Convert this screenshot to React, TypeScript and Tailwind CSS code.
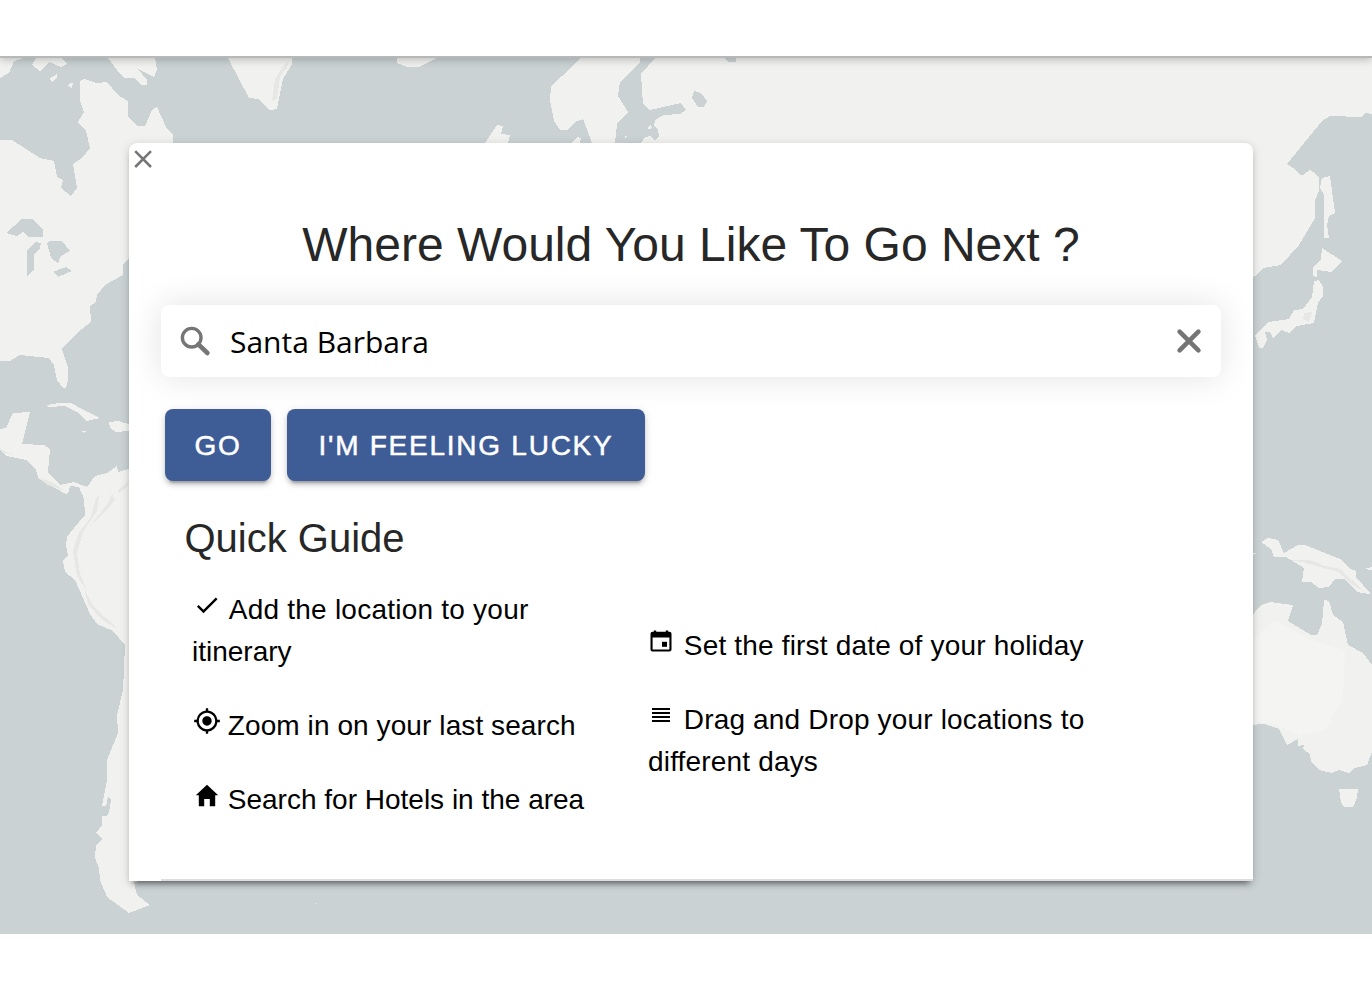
import type { ReactNode } from 'react';
import { MdCheck, MdMyLocation } from 'react-icons/md';

const LAND = [
  // North America
  '0,140 12,140 40,158 54,161 57,177 63,180 61,188 71,196 77,188 73,164 82,158 90,148 86,131 78,122 84,112 80,100 80,81 84,79 97,83 107,82 118,95 128,101 128,117 137,126 145,126 152,110 157,107 167,129 173,134 173,150 180,200 129,259 123,264 123,275 105,285 97,295 96,302 90,306 91,322 78,332 62,349 68,368 68,380 66,388 63,388 57,380 54,365 49,358 20,355 10,361 0,361',
  '0,58 24,58 14,61 9,73 0,78',
  '36,58 32,65 40,71 49,62 61,67 67,64 62,58',
  '49,79 57,74 57,78 52,82',
  '68,86 70,83 73,83 72,88',
  '108,58 117,70 124,78 134,78 142,85 147,85 147,80 138,69 154,77 157,70 155,58',
  // Greenland and Iceland
  '228,58 249,98 258,99 270,110 277,109 283,79 292,64 292,58',
  '397,58 397,63 407,67 419,67 437,58',
  // Europe and Asia
  '580,58 573,66 551,86 550,100 554,121 560,130 567,130 575,122 583,119 592,143 615,143 617,124 628,112 618,96 620,82 640,62 640,58',
  '485,143 497,125 503,126 501,134 510,135 508,143',
  '571,143 577,137 581,138 580,143',
  '624,137 626,135 627,137 625,138',
  '647,128 651,125 652,128 649,129',
  '655,58 641,74 643,104 650,110 681,103 686,110 680,114 664,115 655,120 654,126 658,129 659,136 655,141 650,136 645,137 641,143 641,160 1240,290 1255,276 1263,268 1281,265 1299,245 1315,218 1315,200 1319,191 1319,178 1316,174 1310,170 1303,175 1300,175 1296,170 1287,164 1322,121 1330,116 1361,117 1366,113 1372,114 1372,58',
  '1322,178 1330,176 1335,213 1329,216 1327,225 1329,238 1324,238 1324,195 1320,188',
  '1322,248 1342,261 1331,272 1317,270 1317,277 1313,276 1313,268 1321,259',
  '1314,281 1319,280 1323,287 1323,296 1318,303 1314,323 1297,326 1289,333 1282,330 1273,338 1270,332 1265,332 1267,340 1263,348 1259,348 1255,335 1269,322 1289,319 1294,310 1303,309 1312,297',
  // Caribbean
  '47,405 59,403 71,403 82,409 100,418 87,421 77,412 65,406 48,407',
  '109,422 118,421 129,424 140,430 128,431 116,432 110,428',
  '82,431 87,431 83,433',
  // Central and South America
  '0,429 6,428 13,413 30,412 22,444 44,445 50,449 48,472 60,485 74,482 87,487 95,476 107,473 117,466 118,472 129,469 200,469 200,870 134,882 137,895 150,905 129,913 107,897 100,880 99,868 95,858 96,845 102,839 96,833 102,825 102,816 107,816 109,812 111,800 108,797 106,806 102,806 107,780 107,760 118,733 117,715 123,690 125,645 113,631 97,624 90,614 75,580 65,572 63,561 68,555 66,545 67,537 74,528 85,515 84,499 79,487 70,486 69,491 66,494 39,479 36,470 26,460 6,456 0,450',
  // New Guinea
  '1261,542 1268,538 1278,540 1284,553 1298,545 1305,545 1340,559 1349,568 1356,571 1356,577 1370,593 1369,594 1357,592 1344,579 1335,579 1329,587 1319,588 1311,582 1302,582 1304,568 1286,557 1274,557 1271,549',
  '1364,569 1372,567 1372,570',
  '1250,551 1257,554 1250,555',
  // Australia and Tasmania
  '1250,618 1261,605 1270,602 1293,605 1288,621 1311,635 1317,635 1322,624 1324,600 1329,601 1333,615 1343,622 1348,645 1363,653 1372,665 1372,752 1367,765 1355,768 1349,773 1339,770 1332,773 1319,770 1311,762 1310,754 1303,749 1304,745 1298,746 1298,739 1287,745 1279,729 1264,724 1250,725',
  '1339,789 1358,789 1357,798 1353,807 1344,807 1341,802',
  '315,903 316,903 316,904 315,904',
];

const WATER = [
  '6,233 22,219 32,219 43,230 43,237 29,237 23,232 17,236',
  '27,250 35,242 41,243 40,248 34,254 34,270 27,276',
  '47,243 50,241 62,241 70,251 61,256 58,263 51,258',
  '53,272 66,267 72,271 58,277',
  '62,269 66,268 69,270 64,272',
  '694,91 701,93 707,101 704,107 698,107 692,98',
  '724,58 728,62 736,62 736,58',
];

const RELIEF = [
  '96,498 99,495 97,511 83,532 77,553 80,574 88,592 77,576 73,551 79,533 91,517',
  '112,494 115,500 107,510 90,526 108,503',
  '84,588 93,606 105,617 116,628 102,620 88,604',
  '118,490 129,481 127,487 119,493',
  '0,448 6,452 14,454 4,453',
  '1288,560 1310,560 1325,566 1340,569 1352,580 1365,592 1350,583 1338,572 1320,567 1302,562',
  '284,65 289,60 287,68 280,77 277,99 272,101 275,79',
  '1304,313 1312,312 1309,322 1303,319',
  '38,477 52,482 65,491 48,485',
];

function WorldMap() {
  return (
    <svg className="absolute inset-0 h-full w-full" viewBox="0 58 1372 876" shapeRendering="crispEdges">
      {LAND.map((p) => (
        <polygon key={p} points={p} fill="#f1f1ef" />
      ))}
      <polygon points="1253,640 1275,620 1310,640 1345,650 1343,700 1325,730 1300,735 1270,722 1253,722" fill="#f4f4f2" />
      {RELIEF.map((p) => (
        <polygon key={p} points={p} fill="#e7e8e6" />
      ))}
      {WATER.map((p) => (
        <polygon key={p} points={p} fill="#cad2d3" />
      ))}
    </svg>
  );
}

function CloseIcon() {
  return (
    <svg className="h-7 w-7" viewBox="0 0 28 28" stroke="#757575" strokeWidth="2.5">
      <path d="M6.2 6.2l15.8 15.8M22 6.2L6.2 22" />
    </svg>
  );
}

function SearchIcon() {
  return (
    <svg className="h-8 w-8 shrink-0" viewBox="0 0 32 32" fill="none" stroke="#757575" strokeLinecap="round">
      <circle cx="12.7" cy="12.7" r="9.3" strokeWidth="3.4" />
      <path d="M20.2 20.2l8.2 7.8" strokeWidth="4.6" />
      <path d="M19 19l2 2" strokeWidth="3.6" />
    </svg>
  );
}

function ClearIcon() {
  return (
    <svg className="h-8 w-8 shrink-0" viewBox="0 0 32 32" stroke="#757575" strokeWidth="4.6" strokeLinecap="round">
      <path d="M6.6 6.6l18.8 18.8M25.4 6.6L6.6 25.4" />
    </svg>
  );
}

function HomeIcon() {
  return (
    <svg className="relative top-px left-px inline-block h-7 w-7 align-baseline" viewBox="0 0 28 28">
      <path d="M14 2.8L25.2 13.2H22.2V24.2H16.8V17H11.2V24.2H5.8V13.2H2.8z" />
    </svg>
  );
}

function CalendarIcon() {
  return (
    <svg className="relative -left-px inline-block h-7 w-7 align-baseline" viewBox="0 0 28 28">
      <path
        fillRule="evenodd"
        d="M6.8 3.4h2.4v1.4h9.6V3.4h2.4v1.4h1.3a2 2 0 0 1 2 2v15.8a2 2 0 0 1-2 2H5.5a2 2 0 0 1-2-2V6.8a2 2 0 0 1 2-2h1.3zM5.6 10.6v11.9h16.8V10.6z"
      />
      <path d="M15 14.8h5v5h-5z" />
    </svg>
  );
}

function LinesIcon() {
  return (
    <svg className="relative -left-px inline-block h-7 w-7 align-baseline" viewBox="0 0 28 28" shapeRendering="crispEdges">
      <path d="M5 7h18v2H5zM5 11h18v2H5zM5 15h18v2H5zM5 19h18v2H5z" />
    </svg>
  );
}

function Tip({ icon, className, children }: { icon: ReactNode; className: string; children: ReactNode }) {
  return (
    <p className="text-[28px] leading-[42px] text-black">
      {icon} <span className={className}>{children}</span>
    </p>
  );
}

const BUTTON =
  'h-[72px] rounded-lg bg-[#3e5c96] pt-px text-[28px] leading-[71px] text-white tracking-[1.75px] [-webkit-text-stroke:0.5px_white] shadow-[0_6px_2px_-4px_rgba(0,0,0,0.2),0_4px_4px_0_rgba(0,0,0,0.14),0_2px_10px_0_rgba(0,0,0,0.12)]';

export default function App() {
  return (
    <div className="flex h-[1002px] w-[1372px] flex-col overflow-hidden bg-white font-['Liberation_Sans',Arial,sans-serif]">
      <header className="relative z-10 h-[58px] shrink-0 border-b-2 border-[#b6b9b8] bg-white shadow-[0_2px_8px_rgba(0,0,0,0.22)]" />
      <main className="relative h-[876px] shrink-0 overflow-hidden bg-[#cad2d3] pt-[85px] pl-[129px]">
        <WorldMap />
        <section className="relative flex h-[738px] w-[1124px] flex-col rounded-t-lg bg-white px-8 shadow-[0_6px_6px_-4px_rgba(0,0,0,0.5),0_2px_10px_0_rgba(0,0,0,0.17)]">
          <button className="absolute top-0.5 left-0" aria-label="Close">
            <CloseIcon />
          </button>
          <h1 className="mt-[70px] text-center text-[48px] leading-[64px] whitespace-nowrap text-[#272727]">
            Where Would You Like To Go Next ?
          </h1>
          <div className="mt-7 flex h-[72px] shrink-0 items-center rounded-lg bg-white pr-4 pl-[18px] shadow-[0_0_32px_2px_rgba(0,0,0,0.1)]">
            <SearchIcon />
            <span className="ml-[19px] flex-1 pt-0.5 font-['Open_Sans',sans-serif] text-[30px] leading-[44px] text-black">Santa Barbara</span>
            <ClearIcon />
          </div>
          <div className="mt-8 ml-1 flex shrink-0 gap-4">
            <button className={BUTTON + ' w-[106px]'}>GO</button>
            <button className={BUTTON + ' w-[358px]'}>I&apos;M FEELING LUCKY</button>
          </div>
          <h2 className="mt-[25px] ml-[23.5px] text-[40px] leading-[64px] text-[#272727]">Quick Guide</h2>
          <div className="mt-[19px] ml-[31px] flex">
            <div className="flex w-[455px] flex-col gap-8 pr-12">
              <Tip
                icon={<MdCheck className="relative left-px inline-block h-7 w-7 align-baseline" />}
                className="ml-px tracking-[0.23px]"
              >
                Add the location to your <span className="tracking-normal">itinerary</span>
              </Tip>
              <Tip
                icon={<MdMyLocation className="relative left-px inline-block h-7 w-7 align-baseline" />}
                className="tracking-[0.09px]"
              >
                Zoom in on your last search
              </Tip>
              <Tip icon={<HomeIcon />} className="tracking-normal">
                Search for Hotels in the area
              </Tip>
            </div>
            <div className="ml-px flex w-[460px] flex-col gap-8 pt-9">
              <Tip icon={<CalendarIcon />} className="tracking-[0.18px]">
                Set the first date of your holiday
              </Tip>
              <Tip icon={<LinesIcon />} className="tracking-[0.17px]">
                Drag and Drop your locations to different days
              </Tip>
            </div>
          </div>
          <div className="mt-auto -mr-8 h-0.5 shrink-0 bg-[#dedede]" />
        </section>
      </main>
    </div>
  );
}
